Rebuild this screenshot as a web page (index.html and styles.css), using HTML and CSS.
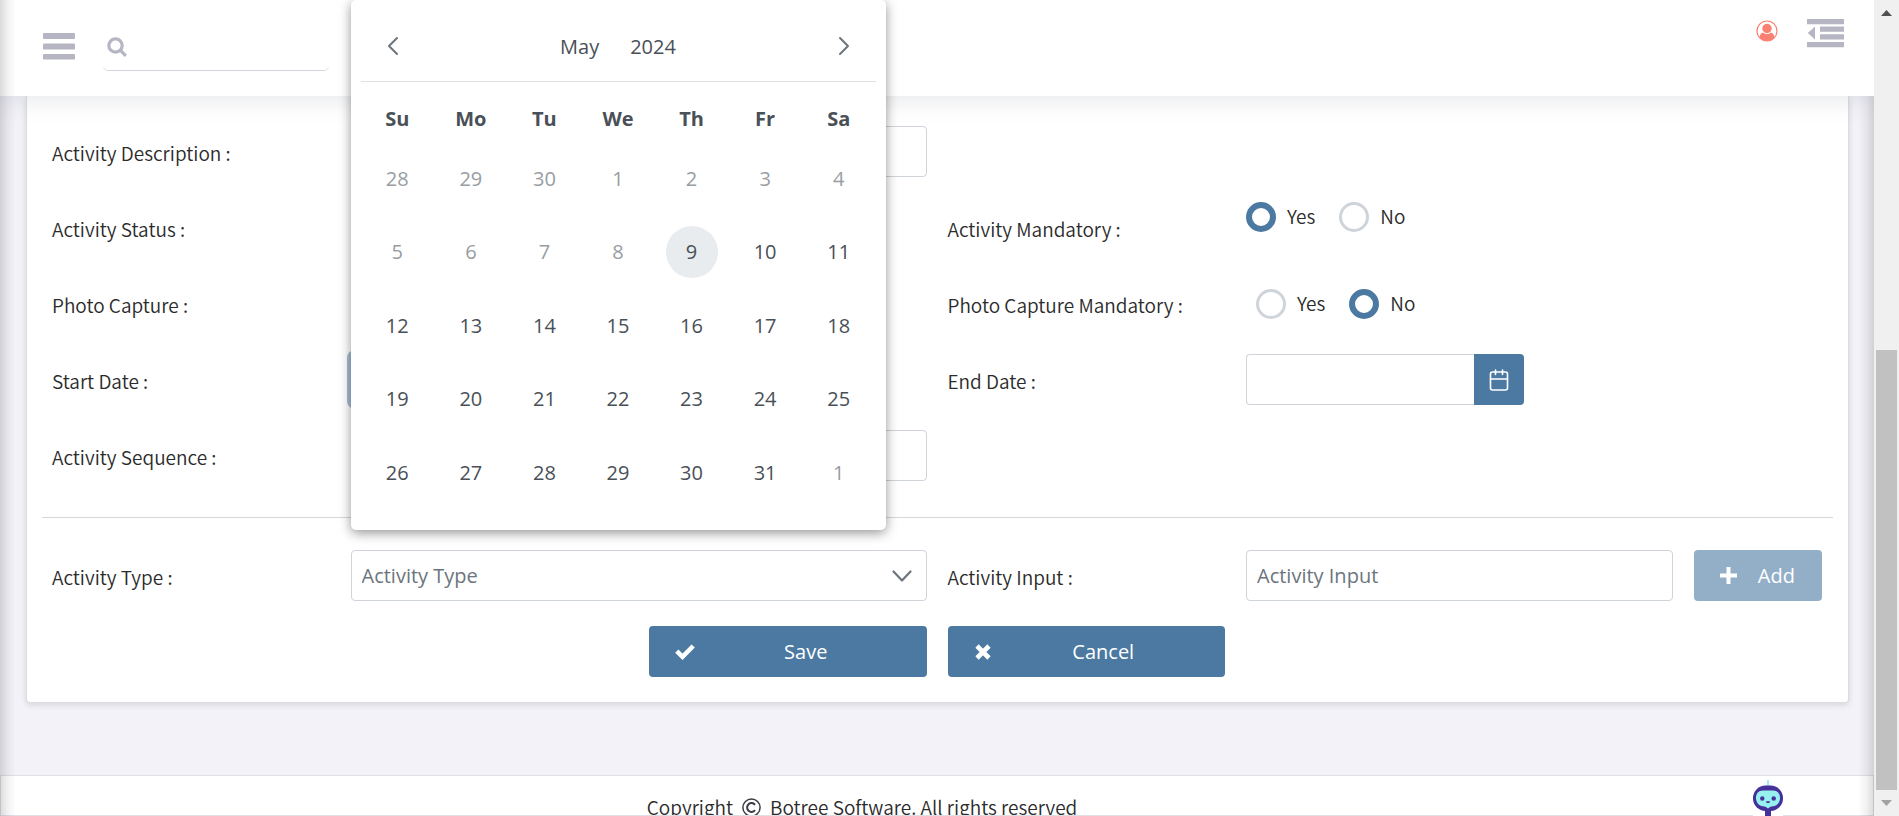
FILE: index.html
```html
<!DOCTYPE html>
<html lang="en">
<head>
<meta charset="utf-8">
<title>Activity</title>
<link rel="stylesheet" href="styles.css">
</head>
<body>
<div class="page">
  <header class="topbar">
    <button class="icon-btn" type="button" aria-label="Menu">
      <svg width="32" height="27" viewBox="0 0 32 27"><g fill="#b5b5c3"><rect width="32" height="6" rx="1"/><rect y="10.5" width="32" height="6" rx="1"/><rect y="21" width="32" height="5.500" rx="1"/></g></svg>
    </button>
    <label class="search">
      <svg width="20" height="20" viewBox="0 0 20 20" fill="none" stroke="#b5b5c3" stroke-width="3.200"><circle cx="8.500" cy="8.500" r="6.700"/><path d="M13.200 13.200 18.800 18.800"/></svg>
      <input type="text" aria-label="Search">
    </label>
    <div class="tools">
      <button class="icon-btn" type="button" aria-label="Profile">
        <svg width="22" height="22" viewBox="0 0 22 22"><circle cx="11" cy="11" r="10" fill="#fff" stroke="#fa8072" stroke-width="1.200"/><circle cx="11" cy="8.500" r="4.700" fill="#fa8072"/><path d="M3.500 17.500C4 14 5.500 12.600 7.200 12.400c2 2 5.600 2 7.600 0 1.700.2 3.200 1.600 3.700 5.100C16.500 20 14 21 11 21s-5.500-1-7.500-3.500z" fill="#fa8072"/></svg>
      </button>
      <button class="icon-btn" type="button" aria-label="Toggle side panel">
        <svg width="37" height="29" viewBox="0 0 37 29" fill="#b5b5c3"><path d="M0 0h37v5.200H0zM13 7.500h24v5.200H13zM13 15.300h24v5.200H13zM0 23h37v5.200H0zM8 7.500v13L.8 14z"/></svg>
      </button>
    </div>
  </header>

  <main class="content">
    <form class="card">
      <div class="row">
        <label class="name" for="desc">Activity Description :</label>
        <input class="box span4" id="desc" type="text">
      </div>
      <div class="row">
        <span class="name">Activity Status :</span>
        <span class="span4"></span>
        <span class="name" id="mand">Activity Mandatory :</span>
        <div class="radios top" role="radiogroup" aria-labelledby="mand">
          <label><input type="radio" name="mand" checked>Yes</label>
          <label><input type="radio" name="mand">No</label>
        </div>
      </div>
      <div class="row">
        <span class="name">Photo Capture :</span>
        <span class="span4"></span>
        <span class="name" id="photo">Photo Capture Mandatory :</span>
        <div class="radios inset" role="radiogroup" aria-labelledby="photo">
          <label><input type="radio" name="photo">Yes</label>
          <label><input type="radio" name="photo" checked>No</label>
        </div>
      </div>
      <div class="row">
        <label class="name" for="start">Start Date :</label>
        <div class="span4 date">
          <input class="box focused" id="start" type="text">
          <div class="calendar">
            <div class="cal-head">
              <button class="icon-btn" type="button" aria-label="Previous month"><svg width="12" height="20" viewBox="0 0 12 20" fill="none" stroke="#6c757d" stroke-width="2" stroke-linecap="round" stroke-linejoin="round"><path d="M10 2 2 10l8 8"/></svg></button>
              <div class="cal-title"><button class="icon-btn" type="button">May</button><button class="icon-btn" type="button">2024</button></div>
              <button class="icon-btn" type="button" aria-label="Next month"><svg width="12" height="20" viewBox="0 0 12 20" fill="none" stroke="#6c757d" stroke-width="2" stroke-linecap="round" stroke-linejoin="round"><path d="M2 2l8 8-8 8"/></svg></button>
            </div>
            <table>
              <thead><tr><th>Su</th><th>Mo</th><th>Tu</th><th>We</th><th>Th</th><th>Fr</th><th>Sa</th></tr></thead>
              <tbody>
                <tr class="off"><td>28</td><td>29</td><td>30</td><td>1</td><td>2</td><td>3</td><td>4</td></tr>
                <tr><td class="off">5</td><td class="off">6</td><td class="off">7</td><td class="off">8</td><td><span class="today">9</span></td><td>10</td><td>11</td></tr>
                <tr><td>12</td><td>13</td><td>14</td><td>15</td><td>16</td><td>17</td><td>18</td></tr>
                <tr><td>19</td><td>20</td><td>21</td><td>22</td><td>23</td><td>24</td><td>25</td></tr>
                <tr><td>26</td><td>27</td><td>28</td><td>29</td><td>30</td><td>31</td><td class="off">1</td></tr>
              </tbody>
            </table>
          </div>
        </div>
        <label class="name" for="end">End Date :</label>
        <div class="span4 date">
          <input class="box" id="end" type="text">
          <button class="btn picker" type="button" aria-label="Choose end date">
            <svg width="20" height="22" viewBox="0 0 20 22" fill="none" stroke="#fff" stroke-width="1.600" stroke-linecap="round"><rect x="1.500" y="3" width="17" height="18" rx="2"/><path d="M1.500 10h17M6.500 1v4.500M13.500 1v4.500"/></svg>
          </button>
        </div>
      </div>
      <div class="row">
        <label class="name" for="seq">Activity Sequence :</label>
        <input class="box span4" id="seq" type="text">
      </div>
      <hr>
      <div class="row">
        <label class="name" for="type">Activity Type :</label>
        <div class="span4 select">
          <select class="box" id="type"><option>Activity Type</option></select>
          <svg width="20" height="13" viewBox="0 0 20 13" fill="none" stroke="#6c757d" stroke-width="2.200" stroke-linecap="round" stroke-linejoin="round"><path d="M1.500 1.500 10 10.500l8.500-9"/></svg>
        </div>
        <label class="name" for="input">Activity Input :</label>
        <input class="box span3" id="input" type="text" placeholder="Activity Input">
        <button class="btn add" type="button" disabled>
          <svg width="17" height="17" viewBox="0 0 17 17" fill="#fff"><path d="M6.500 0h4v6.500H17v4h-6.500V17h-4v-6.500H0v-4h6.500z"/></svg>
          <span>Add</span>
        </button>
      </div>
      <div class="row actions">
        <button class="btn first" type="button">
          <svg width="20" height="16" viewBox="0 0 20 16" fill="none" stroke="#fff" stroke-width="4.600"><path d="M1.800 7.200 7.500 12.800 18.200 2"/></svg>
          <span>Save</span>
        </button>
        <button class="btn" type="button">
          <svg width="18" height="16" viewBox="0 0 18 16" fill="none" stroke="#fff" stroke-width="4.600"><path d="M3 2l12 12M15 2 3 14"/></svg>
          <span>Cancel</span>
        </button>
      </div>
    </form>
  </main>

  <footer class="footer">
    <p>Copyright <svg width="19" height="19" viewBox="0 0 19 19" fill="none" stroke="#3c3c44"><circle cx="9.500" cy="9.500" r="8.600" stroke-width="1.500"/><path d="M13 6.800a4.400 4.400 0 1 0 0 5.400" stroke-width="2"/></svg> Botree Software. All rights reserved</p>
  </footer>
  <svg class="bot" width="32" height="36" viewBox="0 0 32 36"><path d="M1 36V31h30v5z" fill="#fff"/><path d="M16 0v6" stroke="#9cf0f0" stroke-width="2"/><rect x="1" y="5.500" width="30" height="25.500" rx="12.500" fill="#46309a"/><path d="M13 29h6v7h-6z" fill="#46309a"/><path d="M11 10.500h10c4.500 0 7 3 7 7.500s-3 7.800-7 8.300c-2 .2-3 .7-5 2.200-2-1.500-3-2-5-2.200-4-.5-7-3.800-7-8.300s2.500-7.500 7-7.500z" fill="#96f1ee"/><circle cx="10.300" cy="18.500" r="2.200" fill="#46309a"/><circle cx="21.700" cy="18.500" r="2.200" fill="#46309a"/><path d="M13.800 21.200h4.400q-.4 2-2.200 2t-2.200-2z" fill="#46309a"/></svg>
</div>
<aside class="scroll" aria-hidden="true">
  <svg width="11" height="6" viewBox="0 0 11 6"><path d="M0 6 5.500 0 11 6z" fill="#505050"/></svg>
  <div class="track"><div class="thumb"></div></div>
  <svg width="11" height="6" viewBox="0 0 11 6"><path d="M0 0h11L5.500 6z" fill="#a3a3a3"/></svg>
</aside>
</body>
</html>
```
FILE: styles.css
```css
* { box-sizing: border-box; }
body {
  margin: 0;
  height: 100vh;
  display: flex;
  overflow: hidden;
  background: #f2f2f8;
  color: #2b2b2b;
  font: 350 19px/26px "Noto Sans CJK SC DemiLight", "Noto Sans CJK SC", sans-serif;
}
button, input, select { font: 20px/26px "Open Sans", sans-serif; }
svg { display: block; flex: none; }
.icon-btn { padding: 0; border: 0; background: none; color: inherit; }

.page {
  position: relative;
  flex: 1;
  min-width: 0;
  display: flex;
  flex-direction: column;
  overflow: hidden;
}
.page::before, .page::after {
  content: "";
  position: absolute;
  top: 0;
  bottom: 0;
  left: 0;
  width: 16px;
  z-index: 12;
  background: linear-gradient(to right, rgba(0,0,0,.14), rgba(0,0,0,.05) 50%, rgba(0,0,0,0));
}
.page::after {
  top: 96px;
  left: auto;
  right: 0;
  background: linear-gradient(to left, rgba(0,0,0,.14), rgba(0,0,0,.05) 50%, rgba(0,0,0,0));
}

.topbar {
  position: relative;
  z-index: 10;
  display: flex;
  align-items: flex-start;
  height: 96px;
  padding: 0 30px 0 43px;
  background: #fff;
  box-shadow: 0 0 26px rgba(62,66,90,.16);
}
.topbar > .icon-btn { margin-top: 33px; }
.search {
  display: flex;
  align-items: center;
  gap: 8px;
  width: 226px;
  height: 48px;
  margin: 23px 0 0 28px;
  padding: 0 4px;
  border-bottom: 1px solid #d5d5de;
  border-radius: 5px;
}
.search input { width: 180px; border: 0; outline: 0; background: none; }
.tools { display: flex; gap: 29px; margin: 19px 0 0 auto; }
.tools .icon-btn { align-self: flex-start; }
.tools .icon-btn:first-child { margin-top: 1px; }

.card {
  margin: 0 25px 0 26px;
  padding: 30px 15px 25px;
  display: flex;
  flex-direction: column;
  gap: 25px;
  background: #fff;
  border: 1px solid #dcdce0;
  border-top: 0;
  border-radius: 0 0 4px 4px;
  box-shadow: 0 2px 6px rgba(0,0,0,.12);
}
.row {
  display: grid;
  grid-template-columns: repeat(12, minmax(0, 1fr));
  column-gap: 21px;
  padding: 0 11px 0 10px;
  min-height: 51px;
  align-items: center;
}
.name { grid-column: span 2; padding-top: 3px; white-space: nowrap; }
.span4 { grid-column: span 4; }
.span3 { grid-column: span 3; }
.box {
  width: 100%;
  height: 51px;
  padding: 0 10px;
  border: 1px solid #ced4da;
  border-radius: 4px;
  background: #fff;
  color: #6c757d;
  outline: 0;
}
.box::placeholder { color: #6c757d; opacity: 1; }
.select { position: relative; }
.select select { appearance: none; display: block; }
.select svg { position: absolute; right: 15px; top: 20px; pointer-events: none; }

.radios { grid-column: span 4; display: flex; gap: 24px; line-height: 28px; }
.radios.top { align-self: start; }
.radios.inset { padding-left: 10px; }
.radios label { display: flex; gap: 11px; }
.radios input {
  appearance: none;
  width: 30px;
  height: 30px;
  margin: 0;
  border: 3px solid #ced4da;
  border-radius: 50%;
  background: #fff;
}
.radios input:checked { border: 6px solid #4b79a1; }

.date { position: relative; display: flex; }
.date .box { width: 228px; border-radius: 4px 0 0 4px; border-right: 0; }
.date .focused { border-color: #a6bfd3; box-shadow: 0 0 0 4px #a6bfd3; }
.date .picker { width: 50px; padding: 0; justify-content: center; border-radius: 0 4px 4px 0; }

.btn {
  grid-column: span 2;
  display: flex;
  align-items: center;
  height: 51px;
  padding: 0 10px 0 26px;
  border: 0;
  border-radius: 4px;
  background: #4b79a1;
  color: #fff;
}
.btn span { flex: 1; text-align: center; }
.btn.add { grid-column: span 1; background: #93aec7; padding: 0 6px 0 26px; }
.btn.first { grid-column: 5 / span 2; }

hr { width: 100%; height: 1px; margin: 11px 0 7px; border: 0; background: #d5d7da; }

.calendar {
  position: absolute;
  z-index: 20;
  top: -354px;
  left: 0;
  width: 535px;
  height: 530px;
  padding: 0 10px;
  background: #fff;
  border-radius: 5px;
  box-shadow: 0 3px 12px rgba(0,0,0,.42);
  color: #495057;
  font: 20px/26px "Open Sans", sans-serif;
}
.cal-head {
  display: flex;
  justify-content: space-between;
  align-items: center;
  height: 82px;
  padding: 10px 26px 0;
  border-bottom: 1px solid #dee2e6;
}
.cal-title { display: flex; gap: 31px; padding-top: 3px; }
.cal-title .icon-btn { font-weight: 500; }
.calendar table { width: 100%; table-layout: fixed; border-collapse: collapse; }
.calendar th { height: 60px; padding: 13px 0 0; font-weight: 700; }
.calendar td { height: 73px; padding: 0; text-align: center; }
.calendar tr:nth-child(even) td { height: 74px; }
.calendar .off { color: #989da2; }
.today { display: block; width: 52px; margin: auto; line-height: 52px; border-radius: 50%; background: #e9ecef; }

.footer {
  flex: 1;
  margin-top: 72px;
  overflow: hidden;
  background: #fff;
  border: 1px solid #dfdfe6;
}
.footer p { display: flex; align-items: center; gap: 9px; margin: 18px 0 0 34.5%; white-space: nowrap; }
.bot { position: absolute; right: 90px; bottom: 0; z-index: 3; }

.scroll {
  width: 25px;
  display: flex;
  flex-direction: column;
  align-items: center;
  gap: 6px;
  padding: 10px 0;
  background: #f0f0f0;
}
.track { flex: 1; width: 21px; display: flex; flex-direction: column; justify-content: flex-end; }
.thumb { height: 57%; margin-bottom: 4px; background: #c1c1c1; }
```
